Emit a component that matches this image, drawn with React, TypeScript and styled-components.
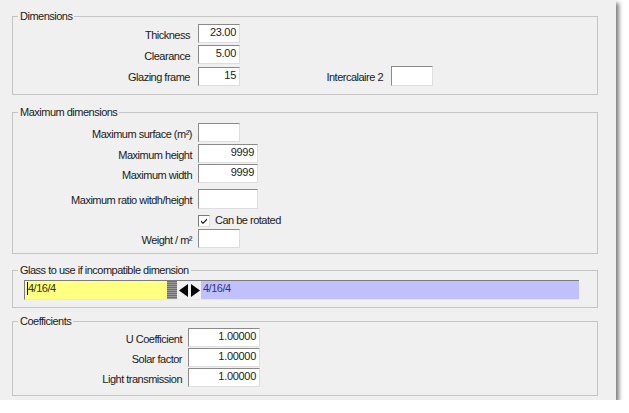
import styled, { createGlobalStyle } from 'styled-components';

const Global = createGlobalStyle`
  html, body {
    margin: 0;
    padding: 0;
    background: #ffffff;
  }
  body {
    font-family: "Liberation Sans", Arial, sans-serif;
    font-size: 11px;
    letter-spacing: -0.5px;
    color: #1a1a1a;
  }
`;

const Window = styled.div`
  width: 616px;
  height: 400px;
  box-sizing: border-box;
  padding: 10px 18px 0 12px;
  background: #f0f0f0;
  box-shadow: 3px 3px 4px rgba(0, 0, 0, 0.5);
  display: flex;
  flex-direction: column;
`;

const Group = styled.fieldset<{ $mt?: number }>`
  margin: ${(p) => p.$mt ?? 0}px 0 0;
  padding: 0;
  min-width: 0;
  border: 1px solid #c4c4c4;
`;

const Caption = styled.legend`
  margin-left: 5px;
  padding: 0 2px;
  line-height: 13px;
`;

const Body = styled.div<{ $pt: number; $pb: number }>`
  display: flex;
  flex-direction: column;
  padding: ${(p) => p.$pt}px 0 ${(p) => p.$pb}px;
`;

const Row = styled.div<{ $mt?: number; $gap?: number }>`
  display: flex;
  align-items: center;
  gap: ${(p) => p.$gap ?? 8}px;
  margin-top: ${(p) => p.$mt ?? 0}px;
`;

const Label = styled.div<{ $w: number }>`
  width: ${(p) => p.$w}px;
  text-align: right;
  white-space: nowrap;
  line-height: 13px;
  padding-top: 3px;
`;

const Field = styled.div<{ $w?: number; $h?: number }>`
  width: ${(p) => p.$w ?? 42}px;
  height: ${(p) => p.$h ?? 19}px;
  box-sizing: border-box;
  background: #fff;
  border-style: solid;
  border-width: 1px;
  border-color: #8a8a8a #dedede #dedede #8a8a8a;
  padding: 0 3px;
  text-align: right;
  line-height: 15px;
  letter-spacing: -0.3px;
`;

const Check = styled.div`
  width: 12px;
  height: 12px;
  box-sizing: border-box;
  background: #fff;
  border-style: solid;
  border-width: 1px;
  border-color: #7a7a7a #dedede #dedede #7a7a7a;
  display: flex;
  align-items: center;
  justify-content: center;
`;

const CheckText = styled.span`
  line-height: 13px;
  white-space: nowrap;
`;

const Picker = styled.div`
  display: flex;
  height: 20px;
  margin: 0 18px 0 11px;
  box-sizing: border-box;
  border-top: 1px solid #7c7c7c;
  border-left: 1px solid #7c7c7c;
  border-bottom: 1px solid #e8e8e8;
`;

const Side = styled.div<{ $bg: string; $fg: string; $w?: number }>`
  ${(p) => (p.$w ? `width: ${p.$w}px;` : 'flex: 1;')}
  background: ${(p) => p.$bg};
  color: ${(p) => p.$fg};
  padding: 1px 2px;
  line-height: 12px;
  display: flex;
  align-items: flex-start;
`;

const Caret = styled.span`
  width: 1px;
  height: 13px;
  background: #000;
`;

const Grip = styled.div`
  width: 10px;
  background: repeating-linear-gradient(
    to bottom,
    #6f6f6f 0,
    #6f6f6f 1px,
    #9a9a9a 1px,
    #9a9a9a 2px
  );
`;

const Arrow = styled.div`
  width: 12px;
  background: #f0f0f0;
  display: flex;
  align-items: center;
  justify-content: center;
`;

const formRows = {
  dims: [
    { label: 'Thickness', value: '23.00' },
    { label: 'Clearance', value: '5.00' },
  ],
  coeffs: [
    { label: 'U Coefficient', value: '1.00000' },
    { label: 'Solar factor', value: '1.00000' },
    { label: 'Light transmission', value: '1.00000' },
  ],
};

export default function App() {
  return (
    <>
      <Global />
      <Window>
        {/* dimensions */}
        <Group>
          <Caption>Dimensions</Caption>
          <Body $pt={1} $pb={8}>
            {formRows.dims.map((r, i) => (
              <Row key={r.label} $mt={i ? 2 : 0}>
                <Label $w={177}>{r.label}</Label>
                <Field>{r.value}</Field>
              </Row>
            ))}
            <Row $mt={2}>
              <Label $w={177}>Glazing frame</Label>
              <Field>15</Field>
              <Label $w={135}>Intercalaire 2</Label>
              <Field $h={20} />
            </Row>
          </Body>
        </Group>

        {/* maximum dimensions */}
        <Group $mt={11}>
          <Caption>Maximum dimensions</Caption>
          <Body $pt={4} $pb={5}>
            <Row $gap={6}>
              <Label $w={179}>Maximum surface (m²)</Label>
              <Field />
            </Row>
            <Row $gap={6} $mt={2}>
              <Label $w={179}>Maximum height</Label>
              <Field $w={60}>9999</Field>
            </Row>
            <Row $gap={6} $mt={1}>
              <Label $w={179}>Maximum width</Label>
              <Field $w={60}>9999</Field>
            </Row>
            <Row $gap={6} $mt={6}>
              <Label $w={179}>Maximum ratio witdh/height</Label>
              <Field $w={60} $h={20} />
            </Row>
            <Row $gap={6} $mt={5}>
              <Label $w={179} />
              <Row $gap={5}>
                <Check>
                  <svg width="8" height="8" viewBox="0 0 8 8">
                    <path d="M1 3.5 L3 5.5 L7 1.5 L7 3 L3 7 L1 5 Z" fill="#000" />
                  </svg>
                </Check>
                <CheckText>Can be rotated</CheckText>
              </Row>
            </Row>
            <Row $gap={6} $mt={2}>
              <Label $w={179}>Weight / m²</Label>
              <Field />
            </Row>
          </Body>
        </Group>

        {/* glass to use */}
        <Group $mt={10}>
          <Caption>Glass to use if incompatible dimension</Caption>
          <Body $pt={3} $pb={7}>
            <Picker>
              <Side $bg="#ffff80" $fg="#303010" $w={138}>
                <Caret />
                4/16/4
              </Side>
              <Grip />
              <Arrow>
                <svg width="9" height="13" viewBox="0 0 9 13">
                  <path d="M9 0 L0 6.5 L9 13 Z" fill="#000" />
                </svg>
              </Arrow>
              <Arrow>
                <svg width="9" height="13" viewBox="0 0 9 13">
                  <path d="M0 0 L9 6.5 L0 13 Z" fill="#000" />
                </svg>
              </Arrow>
              <Side $bg="#c0c0fc" $fg="#303090">
                4/16/4
              </Side>
            </Picker>
          </Body>
        </Group>

        {/* coefficients */}
        <Group $mt={7}>
          <Caption>Coefficients</Caption>
          <Body $pt={0} $pb={8}>
            {formRows.coeffs.map((r, i) => (
              <Row key={r.label} $gap={6} $mt={i ? 1 : 0}>
                <Label $w={169}>{r.label}</Label>
                <Field $w={72}>{r.value}</Field>
              </Row>
            ))}
          </Body>
        </Group>
      </Window>
    </>
  );
}
